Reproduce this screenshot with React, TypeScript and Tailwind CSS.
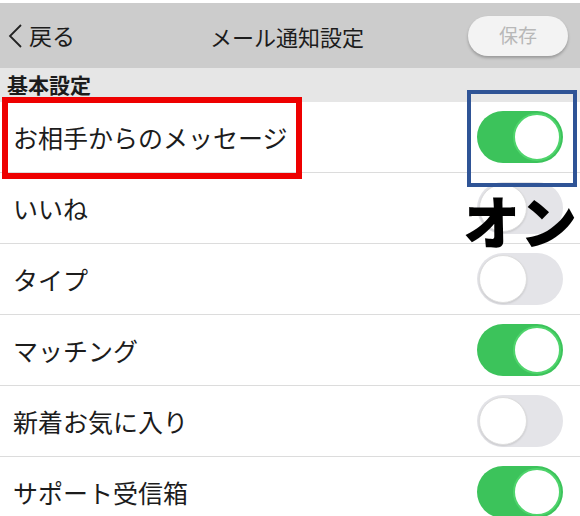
import React from 'react';

type Item = { label: string; on: boolean };

const items: Item[] = [
  { label: 'お相手からのメッセージ', on: true },
  { label: 'いいね', on: false },
  { label: 'タイプ', on: false },
  { label: 'マッチング', on: true },
  { label: '新着お気に入り', on: false },
  { label: 'サポート受信箱', on: true },
];

function Toggle({ on }: { on: boolean }) {
  if (on) {
    return (
      <div className="flex h-[52px] w-[86px] items-center justify-end rounded-full bg-[#3cc35b] p-[2px]">
        <div className="h-[48px] w-[48px] rounded-full border-2 border-[#4fd46c] bg-white" />
      </div>
    );
  }
  return (
    <div className="flex h-[52px] w-[86px] items-center justify-start rounded-full bg-[#e4e4e8] p-[2px]">
      <div className="h-[48px] w-[48px] rounded-full border border-[#dedede] bg-white shadow-[0_1px_2px_rgba(0,0,0,0.12)]" />
    </div>
  );
}

export default function App() {
  return (
    <div
      className="relative h-[516px] w-[580px] overflow-hidden bg-white text-[#1c1c1c]"
      style={{ fontFamily: '"Noto Sans CJK JP", "Noto Sans", sans-serif' }}
    >
      <div className="h-[3px] bg-white" />
      {/* nav bar */}
      <div className="flex h-[65px] items-center bg-[#cccccc] pr-[12px]">
        <div className="flex items-center pl-[7px]">
          <svg width="17" height="26" viewBox="0 0 17 26" className="mr-[5px]">
            <polyline points="14,2 3,13 14,24" fill="none" stroke="#222" strokeWidth="1.8" />
          </svg>
          <span className="text-[23px] leading-none">戻る</span>
        </div>
        <div className="ml-[135px] text-[22px] leading-none">メール通知設定</div>
        <div className="ml-auto flex h-[40px] w-[100px] items-center justify-center rounded-full bg-[#f3f3f3] text-[19px] text-[#b8b8b8] shadow-[0_2px_3px_rgba(0,0,0,0.25)]">
          保存
        </div>
      </div>
      {/* section header */}
      <div className="flex h-[34px] items-end bg-[#e6e6e6] pb-[7px] pl-[7px]">
        <span className="text-[21px] font-bold leading-none">基本設定</span>
      </div>
      {/* rows */}
      <div className="flex flex-col">
        {items.map((it) => (
          <div
            key={it.label}
            className="flex h-[71px] shrink-0 items-center justify-between border-b border-[#dcdcdc] pl-[13px] pr-[17px]"
          >
            <span className="text-[25px] leading-none">{it.label}</span>
            <Toggle on={it.on} />
          </div>
        ))}
      </div>

      {/* annotations */}
      <div className="absolute left-[2px] top-[97px] h-[82px] w-[300px] border-[6px] border-[#ee0000]" />
      <div className="absolute left-[467px] top-[90px] h-[97px] w-[110px] border-4 border-[#2f5496]" />
      <div className="absolute left-[463px] top-[191px] text-[57px] font-black leading-none text-black">
        オン
      </div>
    </div>
  );
}
